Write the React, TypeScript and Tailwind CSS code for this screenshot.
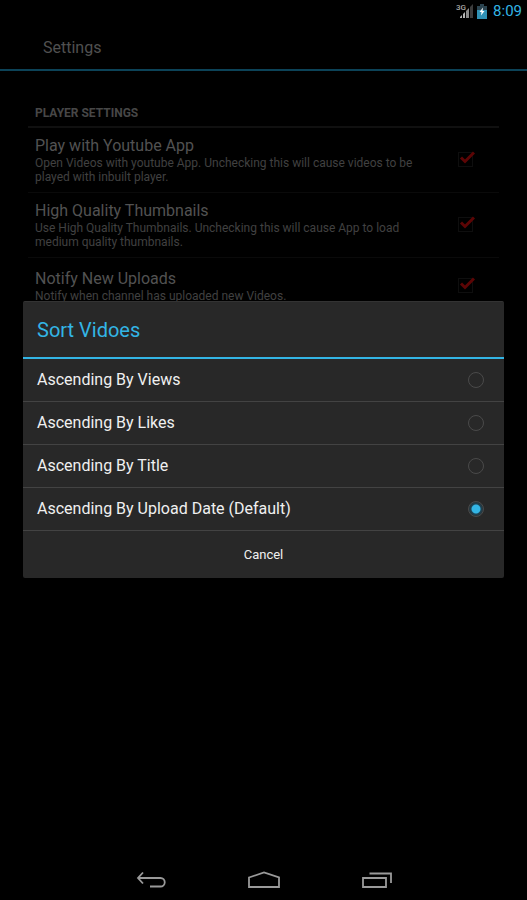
import React, { useState } from "react";

interface Preference {
  id: string;
  title: string;
  summary: string;
  rowClass: string;
}

const preferences: Preference[] = [
  {
    id: "youtubeApp",
    title: "Play with Youtube App",
    summary: "Open Videos with youtube App. Unchecking this will cause videos to be played with inbuilt player.",
    rowClass: "h-[65px]",
  },
  {
    id: "highQuality",
    title: "High Quality Thumbnails",
    summary: "Use High Quality Thumbnails. Unchecking this will cause App to load medium quality thumbnails.",
    rowClass: "h-[65px]",
  },
  {
    id: "notifyUploads",
    title: "Notify New Uploads",
    summary: "Notify when channel has uploaded new Videos.",
    rowClass: "h-[56px]",
  },
];

const sortOptions = [
  "Ascending By Views",
  "Ascending By Likes",
  "Ascending By Title",
  "Ascending By Upload Date (Default)",
];

const StatusBar = () => (
  <div className="flex h-[22px] shrink-0 items-center justify-end pr-[5px]">
    <svg width="18" height="16" viewBox="0 0 18 16" className="mr-1">
      <text x="1" y="7" fontSize="8" fontWeight="500" fontFamily="Roboto, sans-serif" fill="#aaaaaa">
        3G
      </text>
      <path d="M5 15v-1l2-2v3zM8 15v-4l2-2v6z" fill="#b5b5b5" />
      <path d="M11 15V8l3-3v10z" fill="#8a8a8a" />
      <path d="M15 15V4l3-3v14z" fill="#3c3c3c" />
    </svg>
    <svg width="10" height="15" viewBox="0 0 10 15" className="mr-[6px]">
      <path d="M3 0h4v2h3v4H0V2h3z" fill="#2b4450" />
      <path d="M0 6h10v9H0z" fill="#3091b5" />
      <path d="M6 3.500L2.500 8h2L4 11.500 7.500 7h-2z" fill="#ffffff" />
    </svg>
    <span className="text-[15px] leading-[22px] text-[#33b5e5]">8:09</span>
  </div>
);

const App: React.FC = () => {
  const [checked, setChecked] = useState<Record<string, boolean>>({
    youtubeApp: true,
    highQuality: true,
    notifyUploads: true,
  });
  const [sortBy, setSortBy] = useState(sortOptions[3]);
  const [open, setOpen] = useState(true);

  const togglePreference = (id: string) => {
    setChecked((prev) => ({ ...prev, [id]: !prev[id] }));
  };

  return (
    <div className="flex min-h-screen flex-col bg-black font-['Roboto',sans-serif]">
      <StatusBar />

      <div className="relative flex flex-1 flex-col">
        <header className="flex h-[49px] items-center border-b-2 border-[#0c4358] pt-1 pl-[43px]">
          <h1 className="text-base text-[#505050]">Settings</h1>
        </header>

        <main className="px-7 pt-8">
          <h2 className="border-b-2 border-[#101010] px-[7px] pt-px pb-1 text-[12px] leading-[18px] font-bold text-[#474747]">
            PLAYER SETTINGS
          </h2>
          {preferences.map((pref) => (
            <div
              key={pref.id}
              className={`flex items-center justify-between border-b border-[#0a0a0a] pr-6 pl-[7px] ${pref.rowClass}`}
            >
              <label htmlFor={pref.id} className="max-w-[400px] flex-1">
                <span className="block text-base leading-5 text-[#525252]">{pref.title}</span>
                <span className="block text-[12px] leading-[14px] text-[#414141]">{pref.summary}</span>
              </label>
              <span className="relative block size-[18px]">
                <input
                  id={pref.id}
                  type="checkbox"
                  checked={checked[pref.id]}
                  onChange={() => togglePreference(pref.id)}
                  className="m-px block size-[15px] appearance-none border border-[#0e0e0e]"
                />
                {checked[pref.id] && (
                  <svg
                    width="18"
                    height="18"
                    viewBox="0 0 18 18"
                    className="pointer-events-none absolute inset-0"
                    fill="none"
                    stroke="#5c0505"
                    strokeWidth="3"
                  >
                    <path d="M4 6.500l4 4 9-9" />
                  </svg>
                )}
              </span>
            </div>
          ))}
        </main>

        {open && (
          <div className="absolute inset-0 flex items-center justify-center px-[23px]">
            <div
              role="dialog"
              aria-labelledby="sort-title"
              className="w-full rounded-xs border-t border-[#333333] bg-[#282828]"
            >
              <h2
                id="sort-title"
                className="border-b-2 border-[#33b5e5] px-[14px] pt-px text-xl leading-[54px] text-[#33b5e5]"
              >
                Sort Vidoes
              </h2>
              {sortOptions.map((option) => (
                <label
                  key={option}
                  className="flex h-[43px] items-center justify-between border-b border-[#434343] pr-5 pl-[14px] text-base text-[#f0f0f0]"
                >
                  {option}
                  <input
                    type="radio"
                    name="sort"
                    value={option}
                    checked={sortBy === option}
                    onChange={() => setSortBy(option)}
                    className="size-4 appearance-none rounded-full border border-[#4a4a4a] checked:bg-[radial-gradient(circle,#33b5e5_4px,#1d4354_5px,#26343a_7px)]"
                  />
                </label>
              ))}
              <button
                type="button"
                onClick={() => setOpen(false)}
                className="block h-[47px] w-full text-[13px] text-[#f0f0f0]"
              >
                Cancel
              </button>
            </div>
          </div>
        )}
      </div>

      <nav className="flex h-[43px] shrink-0 items-center justify-center pt-[3px]">
        <button type="button" aria-label="Back" className="flex w-[113px] justify-center">
          <svg width="30" height="18" viewBox="0 0 30 18" fill="none" stroke="#9a9a9a" strokeWidth="1.800">
            <path d="M7 1.500L2 7l5 5.500M2 7h22.500a4.200 4.200 0 0 1 0 8.500H14" />
          </svg>
        </button>
        <button type="button" aria-label="Home" className="flex w-[113px] justify-center">
          <svg width="32" height="18" viewBox="0 0 32 18" fill="none" stroke="#9a9a9a" strokeWidth="1.800">
            <path d="M1 6.500L16 1.500l15 5V16H1z" />
          </svg>
        </button>
        <button type="button" aria-label="Recent apps" className="flex w-[113px] justify-center">
          <svg width="30" height="18" viewBox="0 0 30 18" fill="none" stroke="#9a9a9a" strokeWidth="1.800">
            <path d="M1 7h23v9H1zM7.500 2.500H29V12" />
          </svg>
        </button>
      </nav>
    </div>
  );
};

export default App;
